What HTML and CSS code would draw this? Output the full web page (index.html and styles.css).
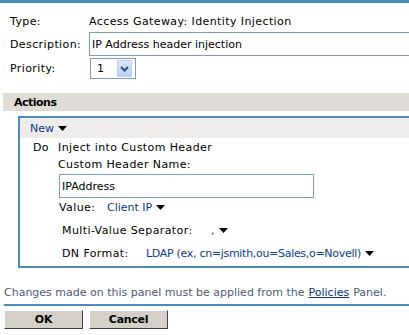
FILE: index.html
```html
<!DOCTYPE html>
<html>
<head>
<meta charset="utf-8">
<link rel="stylesheet" href="styles.css">
</head>
<body>
<div class="topbar"></div>
<div class="form">
  <div class="lbl">Type:</div>
  <div class="val">Access Gateway: Identity Injection</div>
  <div class="lbl">Description:</div>
  <div class="val"><div class="textbox wide">IP Address header injection</div></div>
  <div class="lbl">Priority:</div>
  <div class="val">
    <div class="select"><span class="selval">1</span><span class="selbtn"><svg width="9" height="6" viewBox="0 0 9 6"><path d="M1 1 L4.5 4.5 L8 1" fill="none" stroke="#2b4f8c" stroke-width="2"/></svg></span></div>
  </div>
</div>
<div class="section-head">Actions</div>
<div class="panel">
  <div class="toolbar"><span class="link">New</span><svg class="tri" width="9" height="5" viewBox="0 0 9 5"><path d="M0 0 H9 L4.5 5 Z" fill="#000"/></svg></div>
  <div class="action">
    <div class="do">Do</div>
    <div class="detail">
      <div class="line">Inject into Custom Header</div>
      <div class="line">Custom Header Name:</div>
      <div class="textbox name">IPAddress</div>
      <div class="line value"><span class="vlbl">Value:</span><span class="link">Client IP</span><svg class="tri" width="9" height="5" viewBox="0 0 9 5"><path d="M0 0 H9 L4.5 5 Z" fill="#000"/></svg></div>
      <div class="line sub multi"><span class="sublbl">Multi-Value Separator:</span><span class="link">,</span><svg class="tri" width="9" height="5" viewBox="0 0 9 5"><path d="M0 0 H9 L4.5 5 Z" fill="#000"/></svg></div>
      <div class="line sub dn"><span class="sublbl2">DN Format:</span><span class="link ldap">LDAP (ex, cn=jsmith,ou=Sales,o=Novell)</span><svg class="tri" width="9" height="5" viewBox="0 0 9 5"><path d="M0 0 H9 L4.5 5 Z" fill="#000"/></svg></div>
    </div>
  </div>
</div>
<div class="note">Changes made on this panel must be applied from the <span class="plink">Policies</span> Panel.</div>
<div class="buttons">
  <div class="btn">OK</div>
  <div class="btn">Cancel</div>
</div>
</body>
</html>
```
FILE: styles.css
```css
html, body {
  margin: 0;
  padding: 0;
  background: #fff;
  overflow: hidden;
}
body {
  width: 409px;
  height: 335px;
  font-family: "DejaVu Sans", Verdana, sans-serif;
  font-size: 11px;
  color: #000;
  -webkit-font-smoothing: none;
}
.topbar {
  height: 3px;
  background: #4b8bbe;
}
.form {
  display: grid;
  grid-template-columns: 79px 1fr;
  grid-template-rows: 18px 24px 21px;
  row-gap: 2px;
  padding: 9px 0 0 10px;
  letter-spacing: 0.4px;
}
.lbl, .val {
  display: flex;
  align-items: center;
}
.textbox {
  box-sizing: border-box;
  border: 1px solid #7d9cba;
  background: #fff;
  display: flex;
  align-items: center;
  padding-left: 2px;
  letter-spacing: 0;
}
.wide {
  width: 340px;
  height: 24px;
}
.select {
  box-sizing: border-box;
  width: 46px;
  height: 21px;
  border: 1px solid #7d9cba;
  display: flex;
  align-items: center;
  margin-left: 1px;
}
.selval {
  padding-left: 6px;
  width: 20px;
}
.selbtn {
  width: 15px;
  height: 17px;
  background: linear-gradient(#dce8fb, #b6cdf3);
  border: 1px solid #c3d3ef;
  box-sizing: border-box;
  display: flex;
  align-items: center;
  justify-content: center;
}
.section-head {
  margin: 14px 0 0 3px;
  height: 18px;
  background: #e0ddd6;
  font-weight: bold;
  letter-spacing: -0.5px;
  display: flex;
  align-items: center;
  padding-left: 11px;
}
.panel {
  margin: 5px 0 0 18px;
  border: 2px solid #4b8bbe;
  border-right: none;
  height: 148px;
}
.toolbar {
  height: 20px;
  background: #eeedeb;
  display: flex;
  align-items: center;
  padding-left: 10px;
}
.link {
  color: #0c3a8e;
  letter-spacing: 0;
}
.ldap {
  letter-spacing: -0.3px;
}
.tri {
  margin-left: 4px;
}
.action {
  display: flex;
  padding-top: 1px;
  letter-spacing: 0.4px;
}
.do {
  width: 25px;
  padding-left: 13px;
  height: 17px;
  display: flex;
  align-items: center;
}
.detail {
  display: flex;
  flex-direction: column;
}
.line {
  height: 17px;
  display: flex;
  align-items: center;
}
.name {
  width: 255px;
  height: 24px;
  margin: 1px 0 0 1px;
}
.value {
  margin-top: 1px;
  height: 17px;
  padding-left: 1px;
}
.vlbl {
  width: 48px;
}
.sub {
  padding-left: 4px;
}
.multi {
  margin-top: 6px;
}
.dn {
  margin-top: 6px;
}
.sublbl {
  width: 149px;
}
.sublbl2 {
  width: 84px;
}
.note {
  margin: 16px 0 0 4px;
  color: #4b5b78;
  height: 16px;
  display: flex;
  align-items: center;
}
.plink {
  color: #0c2f8c;
  text-decoration: underline;
  margin: 0 4px;
}
.buttons {
  margin: 4px 0 0 4px;
  border-top: 2px solid #4b8bbe;
  padding-top: 4px;
  display: flex;
  gap: 6px;
}
.btn {
  box-sizing: border-box;
  width: 79px;
  height: 19px;
  background: #d4d0c8;
  border: 1px solid;
  border-color: #fff #404040 #404040 #fff;
  font-weight: bold;
  letter-spacing: -0.3px;
  display: flex;
  align-items: center;
  justify-content: center;
}
```
